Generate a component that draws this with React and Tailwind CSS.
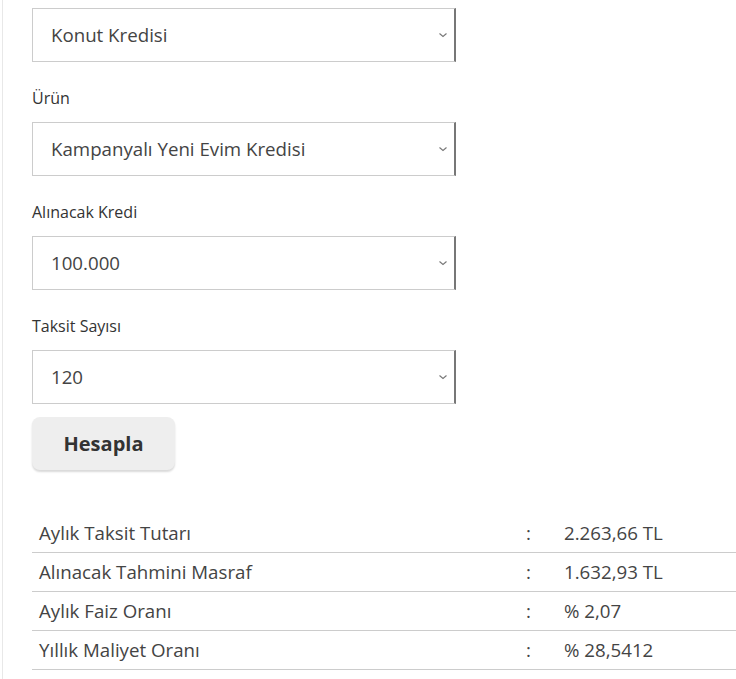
import React from 'react';

const Chevron = () => (
  <svg width="10" height="6" viewBox="0 0 10 6" className="absolute right-[6px] top-1/2 -translate-y-1/2">
    <path d="M1.5 1.5l3.5 3 3.5-3" fill="none" stroke="#777" strokeWidth="1.1" />
  </svg>
);

const SelectBox = ({ value }) => (
  <div className="relative w-[424px] h-[54px] border border-[#cccccc] border-r-2 border-r-[#777777] bg-white flex items-center pl-[18px] text-[18.7px] text-[#444444]">
    {value}
    <Chevron />
  </div>
);

const rows = [
  ['Aylık Taksit Tutarı', '2.263,66 TL'],
  ['Alınacak Tahmini Masraf', '1.632,93 TL'],
  ['Aylık Faiz Oranı', '% 2,07'],
  ['Yıllık Maliyet Oranı', '% 28,5412'],
];

export default function App() {
  return (
    <div className="min-h-[679px] bg-white" style={{ fontFamily: '"Open Sans", "Noto Sans", sans-serif' }}>
      <div className="ml-[2px] border-l border-[#e8e8e8] pl-[29px] pt-[8px] min-h-[679px]">
        <SelectBox value="Konut Kredisi" />
        <div className="text-[16px] text-[#333333] mt-[24px] mb-[12px] leading-[24px]">Ürün</div>
        <SelectBox value="Kampanyalı Yeni Evim Kredisi" />
        <div className="text-[16px] text-[#333333] mt-[24px] mb-[12px] leading-[24px]">Alınacak Kredi</div>
        <SelectBox value="100.000" />
        <div className="text-[16px] text-[#333333] mt-[24px] mb-[12px] leading-[24px]">Taksit Sayısı</div>
        <SelectBox value="120" />
        <button className="mt-[13px] w-[143px] h-[53px] bg-[#eeeeee] rounded-[8px] shadow-[0_2px_2px_rgba(0,0,0,0.15)] text-[20px] font-bold text-[#333333]">
          Hesapla
        </button>
        <div className="mt-[44px]">
          {rows.map(([label, value]) => (
            <div key={label} className="flex items-center h-[39px] border-b border-[#cccccc] text-[18.7px] text-[#444444]">
              <div className="w-[494px] pl-[7px] whitespace-nowrap">{label}</div>
              <div className="w-[38px]">:</div>
              <div className="whitespace-nowrap">{value}</div>
            </div>
          ))}
        </div>
      </div>
    </div>
  );
}
